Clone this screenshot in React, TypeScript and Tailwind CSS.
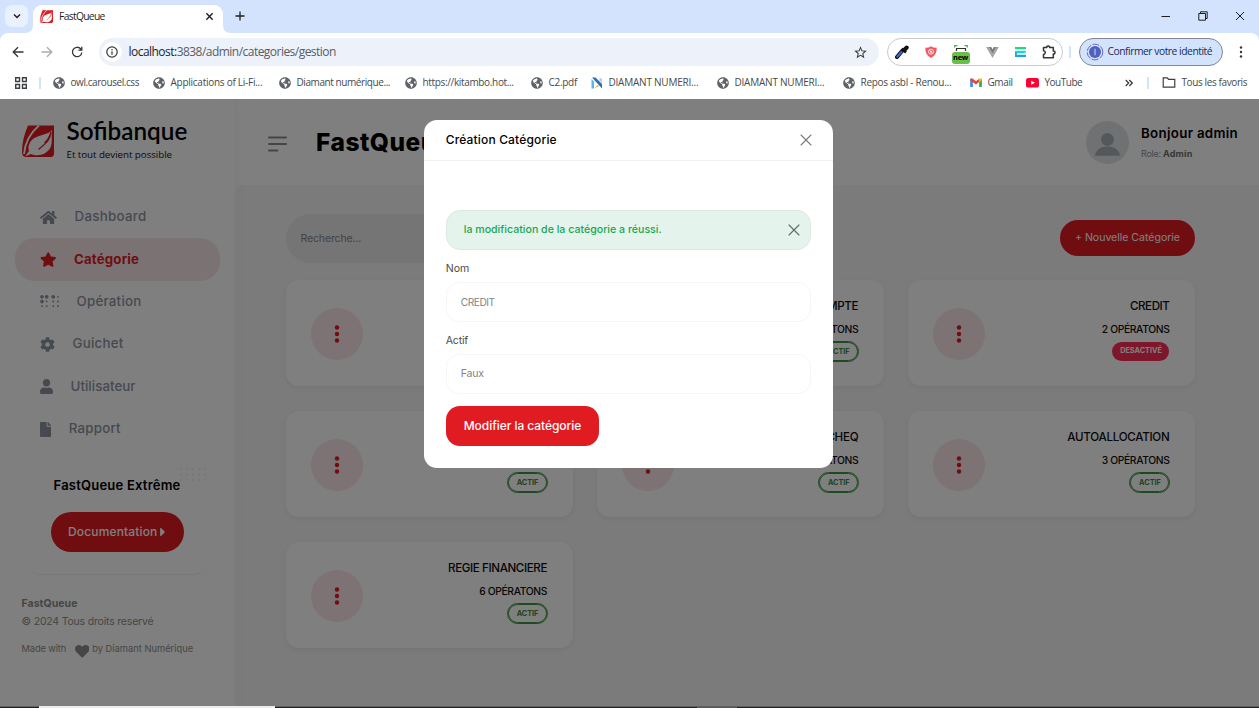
import type { ReactNode } from "react";
import { FaBraille, FaCaretRight, FaCog, FaFile, FaGlobeAmericas, FaHeart, FaHome, FaStar, FaUser } from "react-icons/fa";
import { MdStarBorder } from "react-icons/md";

const seg = "font-['Open_Sans',sans-serif]";

function Leaf({ className }: { className: string }) {
  return (
    <svg viewBox="0 0 32 32" className={className}>
      <path d="M6 0.5H32V28.5Q32 32 28.500 32H3Q0 31 0 27Q0 14 6 0.5Z" fill="#e11b22" />
      <path d="M17 0.5Q3.500 12 2 29" stroke="#fff" strokeWidth="1.8" fill="none" />
      <path d="M30 5C27 10 14 9.500 9 16C5.500 21 6.500 24 7 26L3 31.500L9 29C15 31.500 24 30.500 28.500 22.500C31 17 29 10 30 5Z" fill="#fff" />
      <path d="M29 7C28 17 22 19 16.500 24.500M29 7C27.500 12 26 15 22.500 18" stroke="#e11b22" strokeWidth="1.200" fill="none" />
    </svg>
  );
}

function Cross({ className }: { className: string }) {
  return (
    <svg viewBox="0 0 12 12" className={className} fill="none" stroke="currentColor" strokeWidth="1.1" strokeLinecap="round">
      <path d="M1 1l10 10M11 1L1 11" />
    </svg>
  );
}

function TabStrip() {
  return (
    <div className="flex h-[33px] items-end bg-[#d3e3fd]">
      <div className="mb-[6px] ml-[5px] flex h-[22px] w-[23px] items-center justify-center rounded-[7px] bg-[#e9f1fe]">
        <svg viewBox="0 0 10 10" className="h-2.5 w-2.5" fill="none" stroke="#1f1f1f" strokeWidth="1.5"><path d="M2 3.500l3 3 3-3" /></svg>
      </div>
      <svg viewBox="0 0 8 8" className="ml-[-3px] h-2 w-2"><path d="M8 0V8H0Q8 8 8 0Z" fill="#fff" /></svg>
      <div className="flex h-7 w-[190px] items-center rounded-t-[9px] bg-white pr-[9px] pb-[5px] pl-[7px]">
        <Leaf className="h-[13px] w-[13px]" />
        <span className={`${seg} ml-[6px] flex-1 text-[10.3px] tracking-[-0.68px] text-[#1f1f1f]`}>FastQueue</span>
        <svg viewBox="0 0 10 10" className="h-[9px] w-[9px]" stroke="#1f1f1f" strokeWidth="1.5"><path d="M1.500 1.500l7 7M8.500 1.500l-7 7" /></svg>
      </div>
      <svg viewBox="0 0 8 8" className="h-2 w-2"><path d="M0 0V8H8Q0 8 0 0Z" fill="#fff" /></svg>
      <svg viewBox="0 0 10 10" className="mb-[12px] ml-[4px] h-[10px] w-[10px]" stroke="#1f1f1f" strokeWidth="1.300"><path d="M5 0.500v9M0.500 5h9" /></svg>
      <div className="flex-1" />
      <div className="mr-[14px] flex h-full items-center gap-[27px] pb-px text-[#1f1f1f]">
        <svg viewBox="0 0 10 10" className="h-[10px] w-[10px]" stroke="currentColor"><path d="M0.500 5.500h8.500" /></svg>
        <svg viewBox="0 0 10 10" className="h-[10px] w-[10px]" fill="none" stroke="currentColor"><path d="M0.800 2.500h6.700v6.700H0.800zM2.500 2.200V0.800h6.700v6.700H7.700" /></svg>
        <svg viewBox="0 0 10 10" className="h-[10px] w-[10px]" stroke="currentColor"><path d="M1 1l8 8M9 1L1 9" /></svg>
      </div>
    </div>
  );
}

function Extensions() {
  return (
    <div className="ml-[8px] flex h-[28px] w-[176px] items-center justify-between rounded-full border border-[#c8cbd0] pr-[6px] pl-[7px]">
      <svg viewBox="0 0 14 14" className="h-[14px] w-[14px]">
        <path d="M2 12L7.500 5.500" stroke="#111" strokeWidth="4" strokeLinecap="round" />
        <path d="M2.300 11.700L6.500 7" stroke="#3d6be0" strokeWidth="2" strokeLinecap="round" />
        <path d="M7 3.500l4 4" stroke="#111" strokeWidth="2.500" />
        <path d="M9.500 4.800L11.700 2.500" stroke="#111" strokeWidth="4" strokeLinecap="round" />
      </svg>
      <svg viewBox="0 0 12 12" className="ml-[2px] h-[12px] w-[12px]">
        <path d="M6 0.300Q8.500 2 11.700 1.800Q12 9 6 12Q0 9 0.300 1.800Q3.500 2 6 0.300Z" fill="#ef5b61" />
        <circle cx="6" cy="5.700" r="2.500" fill="none" stroke="#fff" strokeWidth="0.800" /><path d="M4.300 4l3.400 3.400" stroke="#fff" strokeWidth="0.800" /><circle cx="6" cy="5.700" r="0.900" fill="#fff" />
      </svg>
      <div className="mt-[4px] flex h-[19px] w-[19px] flex-col items-center justify-between">
        <svg viewBox="0 0 14 7" className="h-[7px] w-[14px]" fill="none">
          <path d="M0.700 2.500V0.700H3.500M10.500 0.700H13.300V2.500" stroke="#4caf50" strokeWidth="1.300" />
          <path d="M2.500 6V3.500H11.500V6" stroke="#333" strokeWidth="1.200" />
        </svg>
        <span className="flex h-[12px] w-[18px] items-center justify-center rounded-[3px] bg-[#6abf4b] font-['Open_Sans',sans-serif] text-[7.5px] leading-none font-bold tracking-[-0.2px] text-black">new</span>
      </div>
      <svg viewBox="0 0 14 12" className="ml-[2px] h-[11px] w-[13px]"><path d="M0 0H2.900L7 7.200 11.100 0H14L7 12Z" fill="#a5a5a5" /><path d="M2.900 0H5.500L7 2.700 8.500 0H11.100L7 7.200Z" fill="#777" /></svg>
      <svg viewBox="0 0 12 12" className="ml-[2px] h-[12px] w-[11px]"><path d="M0 0.500H12V3H0Z" fill="#1fdb84" /><path d="M0 4.800H10.500V7.300H0Z" fill="#22cfd6" /><path d="M0 4.800H2V9H12V11.500H0Z" fill="#17a5ee" /><path d="M0 4.800H12V6.500H0Z" fill="#20d6c0" /></svg>
      <svg viewBox="0 0 14 14" className="ml-[2px] h-[14px] w-[14px]" fill="none" stroke="#333639" strokeWidth="1.500" strokeLinejoin="round">
        <path d="M1.500 2.500H4.800Q4.600 1 6.200 1T7.600 2.500H11.300V6Q13 5.900 13 7.500T11.300 9V12.700H1.500V9.500Q3.300 9.300 3.300 7.600T1.500 5.700Z" />
      </svg>
    </div>
  );
}

function Toolbar() {
  return (
    <div className="flex h-[38px] items-center rounded-t-[8px] bg-white">
      <svg viewBox="0 0 12 12" className="ml-[12px] h-[12px] w-[12px]" fill="none" stroke="#333639" strokeWidth="1.300"><path d="M11.500 6H1.500M6 1.200L1.200 6 6 10.800" /></svg>
      <svg viewBox="0 0 12 12" className="ml-[17px] h-[12px] w-[12px]" fill="none" stroke="#a9abae" strokeWidth="1.300"><path d="M0.500 6H10.500M6 1.200L10.800 6 6 10.800" /></svg>
      <svg viewBox="0 0 12 12" className="ml-[18px] h-[12px] w-[12px]" fill="none" stroke="#333639" strokeWidth="1.300"><path d="M10.800 6.500A4.700 4.700 0 1 1 9.600 2.800L10.800 4M10.800 0.800V4.200H7.400" /></svg>
      <div className="ml-[16px] flex h-[28px] w-[780px] items-center rounded-full bg-[#ecf1fa] pr-[11px] pl-[3px]">
        <span className="flex h-[20px] w-[20px] items-center justify-center rounded-full bg-white">
          <svg viewBox="0 0 12 12" className="h-[12px] w-[12px]" fill="none" stroke="#333639" strokeWidth="1.200"><circle cx="6" cy="6" r="5.200" /><path d="M6 5.300v3.500M6 3v1.300" /></svg>
        </span>
        <span className={`${seg} ml-[6.500px] flex-1 text-[12px] tracking-[-0.53px] text-[#5a5d61]`}><span className="text-[#1f1f1f]">localhost:</span>3838/admin/categories/gestion</span>
        <MdStarBorder className="h-[15px] w-[15px] text-[#333639]" />
      </div>
      <Extensions />
      <span className="ml-[6px] h-[12px] w-[1.500px] bg-[#d3e3fd]" />
      <div className="ml-[8px] flex h-[28px] w-[144px] items-center rounded-full border border-[#7f8894] bg-[#d3e3fd] pl-[6px]">
        <svg viewBox="0 0 18 18" className="h-[18px] w-[18px]"><circle cx="9" cy="9" r="7.800" fill="#d3e3fd" stroke="#5c6bc0" strokeDasharray="7 1.500" /><circle cx="9" cy="9" r="6" fill="#5060bd" /><path d="M9 5.700v6.600" stroke="#b9c6ee" strokeWidth="1.200" /></svg>
        <span className={`${seg} ml-[4px] text-[10.3px] tracking-[-0.47px] whitespace-nowrap text-[#1b2c4f]`}>Confirmer votre identité</span>
      </div>
      <svg viewBox="0 0 4 12" className="ml-[16px] h-[12px] w-[4px]" fill="#333639"><circle cx="2" cy="1.500" r="1.200" /><circle cx="2" cy="6" r="1.200" /><circle cx="2" cy="10.500" r="1.200" /></svg>
    </div>
  );
}

const globe = <FaGlobeAmericas className="h-[12px] w-[12px] text-[#5f6368]" />;
const feather = (
  <svg viewBox="0 0 12 12" className="h-[12px] w-[12px]"><path d="M1 0.500L11 11.500V7L4.500 0.500Z" fill="#2c6fb7" /><path d="M0.500 2V11.500H3V4.500Z" fill="#58b7e8" /><path d="M8.500 0.500L11 2V6L8.500 3.500Z" fill="#c5c9ce" /><path d="M3.500 11.500L7 7.500 8 9Z" fill="#e9b52c" /></svg>
);
const gmail = (
  <svg viewBox="0 0 13 10" className="h-[9px] w-[12px]"><path d="M0 1.500V10H3V4Z" fill="#4285f4" /><path d="M13 1.500V10H10V4Z" fill="#34a853" /><path d="M0 1.500Q0.500 -0.500 2.500 0.500L6.500 3.700 10.500 0.500V4L6.500 7.200 0 2.500Z" fill="#ea4335" /><path d="M10 1L10.500 0.500Q12.500 -0.500 13 1.500L13 2.500 10 4.600Z" fill="#fbbc04" /></svg>
);
const youtube = (
  <svg viewBox="0 0 13 10" className="h-[10px] w-[13px]"><rect width="13" height="9.600" rx="2.200" fill="#f03" /><path d="M5.200 2.800L9 4.800 5.200 6.800Z" fill="#fff" /></svg>
);

function Mark({ icon, label, box, track }: { icon: ReactNode; label: string; box: string; track: string }) {
  return (
    <div className={`flex shrink-0 items-center ${box}`}>
      {icon}
      <span className={`${seg} ml-[5.500px] text-[10px] whitespace-nowrap text-[#474a4d] ${track}`}>{label}</span>
    </div>
  );
}

function Bookmarks() {
  return (
    <div className="flex h-[28px] items-center bg-white pb-[5px]">
      <svg viewBox="0 0 12 12" className="ml-[15px] h-[12px] w-[12px]" fill="none" stroke="#3c4043" strokeWidth="1.400"><path d="M0.700 0.700h3.800v3.800H0.700zM7.500 0.700h3.800v3.800H7.500zM0.700 7.500h3.800v3.800H0.700zM7.500 7.500h3.800v3.800H7.500z" /></svg>
      <span className="ml-[12px] h-[12px] w-[1.500px] bg-[#d3e3fd]" />
      <div className="ml-[12.500px] flex items-center">
        <Mark icon={globe} label="owl.carousel.css" box="w-[100px]" track="tracking-[-0.43px]" />
        <Mark icon={globe} label="Applications of Li-Fi..." box="w-[126px]" track="tracking-[-0.26px]" />
        <Mark icon={globe} label="Diamant numérique..." box="w-[126px]" track="tracking-[-0.42px]" />
        <Mark icon={globe} label="https://kitambo.hot..." box="w-[126px]" track="tracking-[-0.34px]" />
        <Mark icon={globe} label="C2.pdf" box="w-[60px]" track="tracking-[-0.3px]" />
        <Mark icon={feather} label="DIAMANT NUMERI..." box="w-[126px]" track="tracking-[-0.22px]" />
        <Mark icon={globe} label="DIAMANT NUMERI..." box="w-[126px]" track="tracking-[-0.22px]" />
        <Mark icon={globe} label="Repos asbl - Renou..." box="w-[127px]" track="tracking-[-0.28px]" />
        <Mark icon={gmail} label="Gmail" box="w-[56px]" track="tracking-[-0.4px]" />
        <Mark icon={youtube} label="YouTube" box="w-[99px]" track="tracking-[-0.5px]" />
      </div>
      <svg viewBox="0 0 8 8" className="h-[8px] w-[8px]" fill="none" stroke="#333639" strokeWidth="1.200"><path d="M0.700 1l3 3-3 3M4.300 1l3 3-3 3" /></svg>
      <span className="ml-[14px] h-[12px] w-[1.500px] bg-[#d3e3fd]" />
      <svg viewBox="0 0 14 12" className="ml-[13px] h-[11px] w-[14px]" fill="none" stroke="#3c4043" strokeWidth="1.300"><path d="M0.700 1H5l1.500 1.500H13.300V11H0.700Z" /></svg>
      <span className={`${seg} ml-[6px] text-[10px] tracking-[-0.39px] whitespace-nowrap text-[#474a4d]`}>Tous les favoris</span>
    </div>
  );
}

const nav = [
  { label: "Dashboard", icon: <FaHome className="h-[15px] w-[17px]" />, cls: "text-[#8d93a0] font-medium tracking-[0.29px]" },
  { label: "Catégorie", icon: <FaStar className="h-[15px] w-[16.500px]" />, cls: "rounded-[20px] bg-[#f6e7e7] text-[#e11b22] font-bold tracking-[0.15px]" },
  { label: "Opération", icon: <FaBraille className="h-[15px] w-[19px]" />, cls: "text-[#8d93a0] font-medium tracking-[0.25px]" },
  { label: "Guichet", icon: <FaCog className="h-[15px] w-[15px]" />, cls: "text-[#8d93a0] font-medium tracking-[0.24px]" },
  { label: "Utilisateur", icon: <FaUser className="h-[15px] w-[13px]" />, cls: "text-[#8d93a0] font-medium tracking-[0.05px]" },
  { label: "Rapport", icon: <FaFile className="h-[15px] w-[11.300px]" />, cls: "text-[#8d93a0] font-medium tracking-[0.22px]" },
];

function Sidebar() {
  return (
    <aside className="relative flex w-[236px] shrink-0 flex-col border-r border-[#f7f7f7] bg-white shadow-[2px_0_12px_rgba(0,0,0,0.02)]">
      <div className="flex h-[97px] pl-[22px]">
        <Leaf className="mt-[26px] h-[32px] w-[32px]" />
        <div className="ml-[12.500px] flex flex-col pt-[17px]">
          <span className="font-['Lato',sans-serif] text-[24.300px] leading-[30px] font-semibold text-black">Sofibanque</span>
          <span className={`${seg} mt-px text-[9.800px] leading-[16px] tracking-[-0.06px] text-[#111]`}>Et tout devient possible</span>
        </div>
      </div>
      <nav className="flex flex-col px-[15px]">
        {nav.map((n) => (
          <div key={n.label} className={`flex h-[42.400px] items-center gap-[17.500px] pl-[25px] text-[13.300px] ${n.cls}`}>
            {n.icon}
            <span>{n.label}</span>
          </div>
        ))}
      </nav>
      <div className="mt-[14px] ml-[28px] flex h-[110px] w-[178px] flex-col items-center rounded-[13px] shadow-[0_2px_2px_-1px_rgba(0,0,0,0.07)]">
        <div className="relative flex h-[40px] w-full shrink-0 items-center justify-center">
          <svg viewBox="0 0 26 14" className="absolute top-[3px] right-0 h-[14px] w-[26px]" stroke="#f0f0f0" strokeWidth="2" strokeDasharray="2 4"><path d="M0 2H26M0 7.500H26M0 13H26" /></svg>
          <span className="relative pt-[2px] text-[13px] font-semibold tracking-[0.22px] text-black">FastQueue Extrême</span>
        </div>
        <div className="mt-[8px] flex h-[40px] w-[133px] shrink-0 items-center justify-center gap-[3px] rounded-[20px] bg-[#e11b22] text-[12px] font-medium tracking-[0.15px] text-[#fff]">
          Documentation
          <FaCaretRight className="h-[14px] w-[5.500px]" />
        </div>
      </div>
      <div className="mt-[21px] flex flex-col pl-[21.500px] text-[#8c8c8c]">
        <span className="text-[10.500px] leading-[18px] font-bold tracking-[0.05px]">FastQueue</span>
        <span className="text-[10.500px] leading-[18px] tracking-[-0.19px]">© 2024 Tous droits reservé</span>
        <div className="mt-[9px] flex h-[18px] items-center text-[9.300px] tracking-[0.02px]">
          <span className="tracking-[-0.12px]">Made with</span>
          <FaHeart className="mt-[4px] ml-[8.500px] h-[14.500px] w-[14.500px]" />
          <span className="ml-[3px]">by Diamant Numérique</span>
        </div>
      </div>
    </aside>
  );
}

function TopBar() {
  return (
    <header className="flex h-[86px] items-center bg-white pr-[20px] pl-[32px]">
      <svg viewBox="0 0 19 16" className="mt-[3px] h-[16px] w-[19px]" stroke="#8a8a8a" strokeWidth="2" strokeLinecap="round"><path d="M1 1.500H18M1 8H18M1 14.500H9.500" /></svg>
      <h1 className="ml-[29px] flex-1 text-[24.500px] font-extrabold tracking-[0.500px] text-black">FastQueue</h1>
      <svg viewBox="0 0 43 43" className="h-[43px] w-[43px]"><circle cx="21.500" cy="21.500" r="21.500" fill="#dfe2e5" /><circle cx="21.500" cy="18.500" r="6.500" fill="#a8b1b7" /><path d="M8.700 34.700Q11 25.500 21.500 25.500T34.300 34.700Z" fill="#a8b1b7" /></svg>
      <div className="ml-[12px] flex w-[98px] flex-col pt-px whitespace-nowrap">
        <span className="text-[13.300px] leading-[22px] font-semibold tracking-[0.320px] text-black">Bonjour admin</span>
        <span className="text-[9px] leading-[19px] tracking-[-0.270px] text-[#8d8f9c]">Role: <b className="font-bold tracking-[0.210px] text-[#6d6d6d]">Admin</b></span>
      </div>
    </header>
  );
}

type Category = { title: string; track: string; count: string; active: boolean };
const categories: Category[] = [
  { title: "", track: "", count: "", active: true },
  { title: "COMPTE", track: "tracking-[-0.3px]", count: "OPÉRATONS", active: true },
  { title: "CREDIT", track: "tracking-[-0.43px]", count: "2 OPÉRATONS", active: false },
  { title: "", track: "", count: "", active: true },
  { title: "CHEQ", track: "tracking-[-0.3px]", count: "OPÉRATONS", active: true },
  { title: "AUTOALLOCATION", track: "tracking-[-0.27px]", count: "3 OPÉRATONS", active: true },
  { title: "REGIE FINANCIERE", track: "tracking-[-0.40px]", count: "6 OPÉRATONS", active: true },
];

function CategoryCard({ title, track, count, active }: Category) {
  return (
    <div className="flex h-[106px] justify-between rounded-[13px] bg-white pr-[25.500px] pl-[25px] shadow-[0_2px_5px_rgba(0,0,0,0.06)]">
      <svg viewBox="0 0 52 52" className="mt-[28px] h-[52px] w-[52px]"><circle cx="26" cy="26" r="26" fill="#fae6e8" /><g fill="#e11b22"><circle cx="26" cy="19.500" r="2.200" /><circle cx="26" cy="26" r="2.200" /><circle cx="26" cy="32.500" r="2.200" /></g></svg>
      <div className="flex flex-col items-end pt-[15px] text-[#0d0d0d]">
        <span className={`h-[23px] text-[11.600px] leading-[23px] font-medium ${track}`}>{title}</span>
        <span className="h-[23.500px] text-[10.300px] leading-[23px] font-medium tracking-[-0.360px]">{count}</span>
        {active ? (
          <span className="mt-[0.500px] flex h-[19px] w-[39px] items-center justify-center rounded-full border-[1.500px] border-[#3d9440] text-[7.300px] leading-[14px] font-bold text-[#3d8742] outline-[0.4px] outline-[#3d9440]">ACTIF</span>
        ) : (
          <span className="mt-[0.500px] flex h-[18.500px] w-[57px] items-center justify-center rounded-full bg-[#fd2d58] text-[7.300px] leading-[14px] font-bold text-white">DESACTIVÉ</span>
        )}
      </div>
    </div>
  );
}

function Content() {
  return (
    <main className="flex-1 bg-[#f6f6f6] pr-[64px] pl-[50px]">
      <div className="flex h-[95px] items-start justify-between pt-[29px]">
        <div className="flex h-[48.500px] w-[260px] items-center rounded-full bg-[#ebebeb] pt-px pl-[14.500px] text-[10.600px] tracking-[-0.180px] text-[#84878b]">Recherche...</div>
        <div className="mt-[6px] flex h-[36px] w-[135px] items-center justify-center rounded-full bg-[#e11b22] text-[10.600px] tracking-[-0.040px] text-[#fff]">+ Nouvelle Catégorie</div>
      </div>
      <div className="grid grid-cols-3 gap-x-[24.700px] gap-y-[25px]">
        {categories.map((c, i) => <CategoryCard key={i} {...c} />)}
      </div>
    </main>
  );
}

function Dialog() {
  return (
    <div className="absolute inset-0 flex items-start justify-center bg-black/50 pt-[21px]">
      <div className="mr-[2px] flex h-[348px] w-[408.500px] flex-col rounded-[13px] bg-white">
        <div className="flex h-[41px] items-center justify-between border-b border-[#f0f0f0] pr-[21px] pl-[21.500px]">
          <span className="text-[12px] font-medium tracking-[0.160px] text-black">Création Catégorie</span>
          <Cross className="h-[12px] w-[12px] text-[#7a7a7a]" />
        </div>
        <div className="flex flex-col px-[21.500px] pt-[49px]">
          <div className="flex h-[40px] items-center justify-between rounded-[14px] border border-[#dbe9e2] bg-[#e4f4ec] pr-[10px] pl-[17px]">
            <span className="text-[10.600px] font-medium text-[#20a650]">la modification de la catégorie a réussi.</span>
            <Cross className="h-[12px] w-[12px] text-[#5c6b63]" />
          </div>
          <label className="mt-[9px] h-[23px] text-[10.600px] leading-[20px] tracking-[-0.040px] text-[#4c4c4c]">Nom</label>
          <div className="flex h-[40px] items-center rounded-[13px] border border-[#f6f6f6] pt-px pl-[14px] text-[10.200px] tracking-[-0.480px] text-[#848484]">CREDIT</div>
          <label className="mt-[9px] h-[23px] text-[10.600px] leading-[20px] tracking-[-0.200px] text-[#4c4c4c]">Actif</label>
          <div className="flex h-[40px] items-center rounded-[13px] border border-[#f6f6f6] pl-[14px] text-[10.600px] tracking-[-0.200px] text-[#848484]">Faux</div>
          <div className="mt-[12px] flex h-[40px] w-[153.500px] items-center justify-center rounded-[14px] bg-[#e11b22] text-[12px] font-medium tracking-[-0.050px] text-white">Modifier la catégorie</div>
        </div>
      </div>
    </div>
  );
}

export default function App() {
  return (
    <div className="flex h-[708px] w-[1259px] flex-col overflow-hidden bg-[#d3e3fd] font-['Inter',sans-serif]">
      <TabStrip />
      <Toolbar />
      <Bookmarks />
      <div className="relative flex h-[607px] overflow-hidden">
        <Sidebar />
        <div className="flex min-w-0 flex-1 flex-col">
          <TopBar />
          <Content />
        </div>
        <Dialog />
      </div>
      <div className="flex h-[2px] border-t border-[#5e5e5e] bg-[#222]">
        <span className="ml-[39px] h-[2px] w-[236px] -translate-y-px bg-[#ececec]" />
        <span className="ml-[422px] h-[1px] w-[40px] bg-[#5a5a5a]" />
      </div>
    </div>
  );
}
